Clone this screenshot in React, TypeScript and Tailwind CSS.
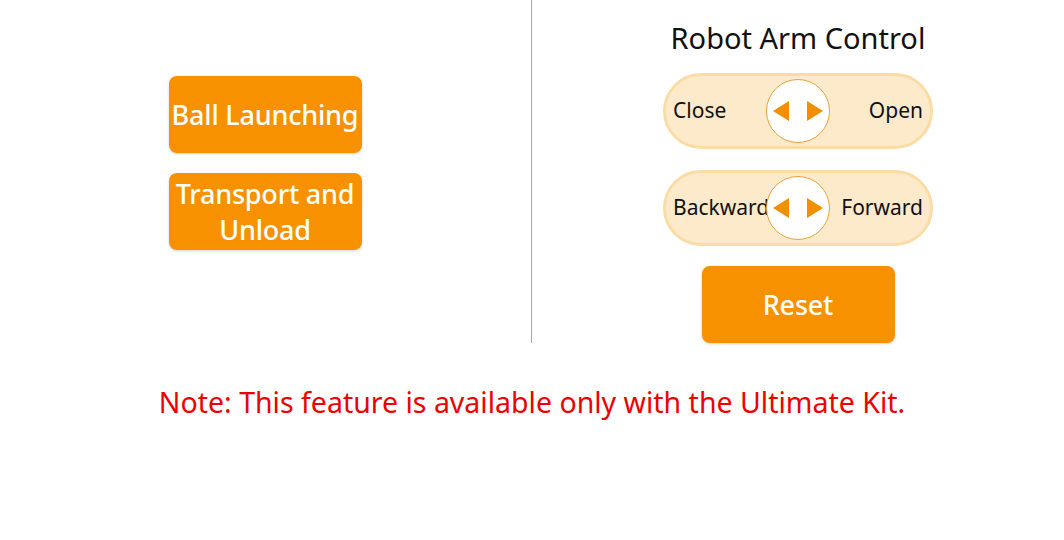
import type { ReactNode } from 'react'

function OrangeButton({ children }: { children: ReactNode }) {
  return (
    <button
      type="button"
      className="flex h-[77px] w-[193px] items-center justify-center rounded-[8px] bg-[#f79100] text-center text-[27px] font-medium leading-[36px] tracking-[-0.2px] text-white shadow-[0_1px_3px_rgba(0,0,0,0.18)]"
    >
      {children}
    </button>
  )
}

function Arrows() {
  return (
    <div className="absolute left-1/2 top-1/2 flex size-[64px] -translate-x-1/2 -translate-y-1/2 items-center justify-center gap-[18px] rounded-full border border-[#e8a23a] bg-white">
      <svg width="16" height="20" viewBox="0 0 16 20">
        <polygon points="16,0 16,20 0,10" fill="#f08f00" />
      </svg>
      <svg width="16" height="20" viewBox="0 0 16 20">
        <polygon points="0,0 0,20 16,10" fill="#f08f00" />
      </svg>
    </div>
  )
}

function Pill({ left, right }: { left: string; right: string }) {
  return (
    <div className="relative flex h-[76px] w-[270px] items-center justify-between rounded-full border-[3px] border-[#fcdca6] bg-[#fdeacb] px-[7px] text-[21px] text-[#111]">
      <span>{left}</span>
      <span>{right}</span>
      <Arrows />
    </div>
  )
}

export default function App() {
  return (
    <div className="h-[540px] w-[1064px] bg-white font-['Noto_Sans',sans-serif]">
      <div className="flex h-[343px]">
        <div className="flex w-[532px] flex-col items-center gap-[20px] border-r border-[#a8a8a8] pt-[76px] pr-px">
          <OrangeButton>Ball Launching</OrangeButton>
          <OrangeButton>
            Transport and
            <br />
            Unload
          </OrangeButton>
        </div>
        <div className="flex flex-1 flex-col items-center pt-[18px]">
          <h1 className="text-[29px] leading-[40px] text-[#111]">Robot Arm Control</h1>
          <div className="mt-[15px] flex flex-col gap-[21px]">
            <Pill left="Close" right="Open" />
            <Pill left="Backward" right="Forward" />
          </div>
          <div className="mt-[20px]">
            <OrangeButton>Reset</OrangeButton>
          </div>
        </div>
      </div>
      <p className="mt-[39px] text-center text-[28.5px] leading-[40px] text-[#ee0000]">
        Note: This feature is available only with the Ultimate Kit.
      </p>
    </div>
  )
}
